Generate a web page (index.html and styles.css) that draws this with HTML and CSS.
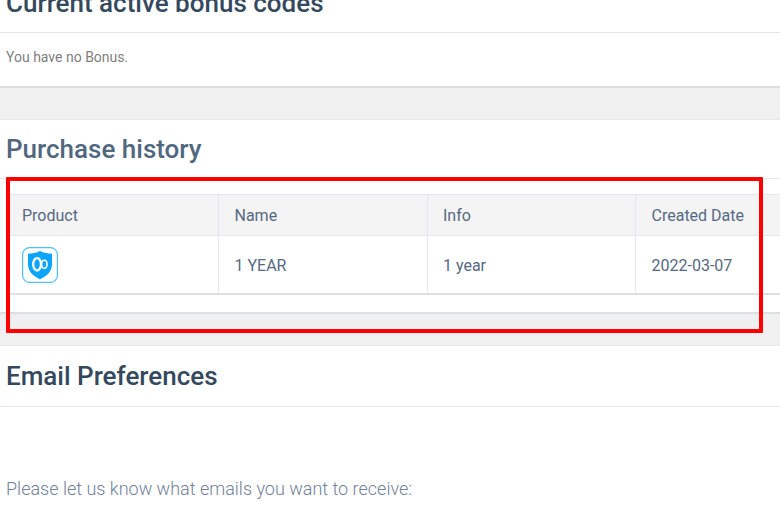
FILE: index.html
```html
<!DOCTYPE html>
<html lang="en">
<head>
    <meta charset="UTF-8">
    <meta name="viewport" content="width=device-width, initial-scale=1.0">
    <title>Account</title>
    <link rel="stylesheet" href="styles.css">
</head>
<body>
    <section class="panel bonus">
        <h2>Current active bonus codes</h2>
        <p class="empty-text">You have no Bonus.</p>
    </section>

    <section class="panel history">
        <h2>Purchase history</h2>
        <table class="history-table">
            <thead>
                <tr>
                    <th class="col-product">Product</th>
                    <th class="col-name">Name</th>
                    <th class="col-info">Info</th>
                    <th class="col-date">Created Date</th>
                </tr>
            </thead>
            <tbody>
                <tr>
                    <td class="icon-cell">
                        <svg class="product-icon" width="36" height="36" viewBox="0 0 36 36">
                            <rect x="0.6" y="0.6" width="34.8" height="34.8" rx="7" fill="#fff" stroke="#4fc0fb" stroke-width="1.2"/>
                            <path d="M18 4C14.500 6 10 6.700 6 6.800V17C6 24.500 11 29 18 32.300C25 29 30 24.500 30 17V6.800C26 6.700 21.500 6 18 4Z" fill="#0ba5fb"/>
                            <ellipse cx="15.100" cy="17.300" rx="3.900" ry="6.200" fill="none" stroke="#fff" stroke-width="2.300"/>
                            <ellipse cx="22.300" cy="17.300" rx="2.700" ry="4" fill="none" stroke="#fff" stroke-width="1.600"/>
                        </svg>
                    </td>
                    <td>1 YEAR</td>
                    <td class="info-cell">1 year</td>
                    <td>2022-03-07</td>
                </tr>
            </tbody>
        </table>
        <div class="highlight"></div>
    </section>

    <section class="panel emails">
        <h2>Email Preferences</h2>
        <p class="emails-text">Please let us know what emails you want to receive:</p>
    </section>
</body>
</html>
```
FILE: styles.css
```css
html {
    overflow: hidden;
}

body {
    margin: 0;
    height: 515px;
    overflow: hidden;
    background: #f0f0f0;
    color: #566983;
    font-family: Roboto, sans-serif;
    font-size: 16px;
}

.panel {
    position: relative;
    box-sizing: border-box;
    margin-bottom: 31px;
    background: #fff;
    border-top: 1px solid #e6e8eb;
    border-bottom: 2px solid #d8dde6;
}

.panel h2 {
    box-sizing: border-box;
    height: 61px;
    margin: 0;
    padding-left: 6px;
    border-bottom: 1px solid #e6e8eb;
    color: #34495e;
    font-size: 26px;
    font-weight: 500;
    line-height: 61px;
}

.bonus {
    height: 117px;
    margin-top: -29px;
}

.panel.bonus h2 {
    line-height: 63px;
}

.empty-text {
    margin: 0;
    padding: 14px 6px;
    color: #7f7f7f;
    font-size: 14px;
    line-height: 20px;
}

.history {
    height: 195px;
    border-bottom-color: #d8dfe5;
}

.panel.history h2 {
    height: 59px;
    color: #506780;
    line-height: 59px;
}

.history-table {
    width: 774px;
    margin: 15px 0 0 6px;
    table-layout: fixed;
    border-collapse: separate;
    border-spacing: 0;
    border-top: 1px solid #e4e7ec;
    border-bottom: 2px solid #dce1e7;
}

.history-table th,
.history-table td {
    box-sizing: border-box;
    padding: 0 15.5px;
    border-right: 1px solid #e4e7ec;
    font-weight: 400;
    text-align: left;
}

.history-table th:last-child,
.history-table td:last-child {
    border-right: 0;
}

.history-table th {
    height: 41px;
    background: #f4f4f4;
    border-bottom: 1px solid #e4e7ec;
}

.history-table td {
    height: 57px;
    padding-top: 2px;
}

.history-table .col-product,
.history-table .icon-cell {
    padding-left: 16px;
}

.history-table .icon-cell {
    padding-top: 0;
}

.history-table .col-info,
.history-table .info-cell {
    padding-left: 15px;
}

.col-product {
    width: 213px;
}

.col-name {
    width: 209px;
}

.col-info {
    width: 208px;
}

.product-icon {
    display: block;
}

/* red frame over the purchase table */
.highlight {
    position: absolute;
    top: 57px;
    left: 6px;
    box-sizing: border-box;
    width: 757px;
    height: 156px;
    border: 4px solid #f00;
    border-radius: 1px;
    z-index: 1;
}

.emails {
    height: 170px;
    margin-bottom: 0;
    border-bottom: 0;
}

.emails-text {
    margin: 0;
    padding: 70px 6px 0;
    color: #718298;
    font-size: 18px;
    font-weight: 300;
    line-height: 24px;
}
```
